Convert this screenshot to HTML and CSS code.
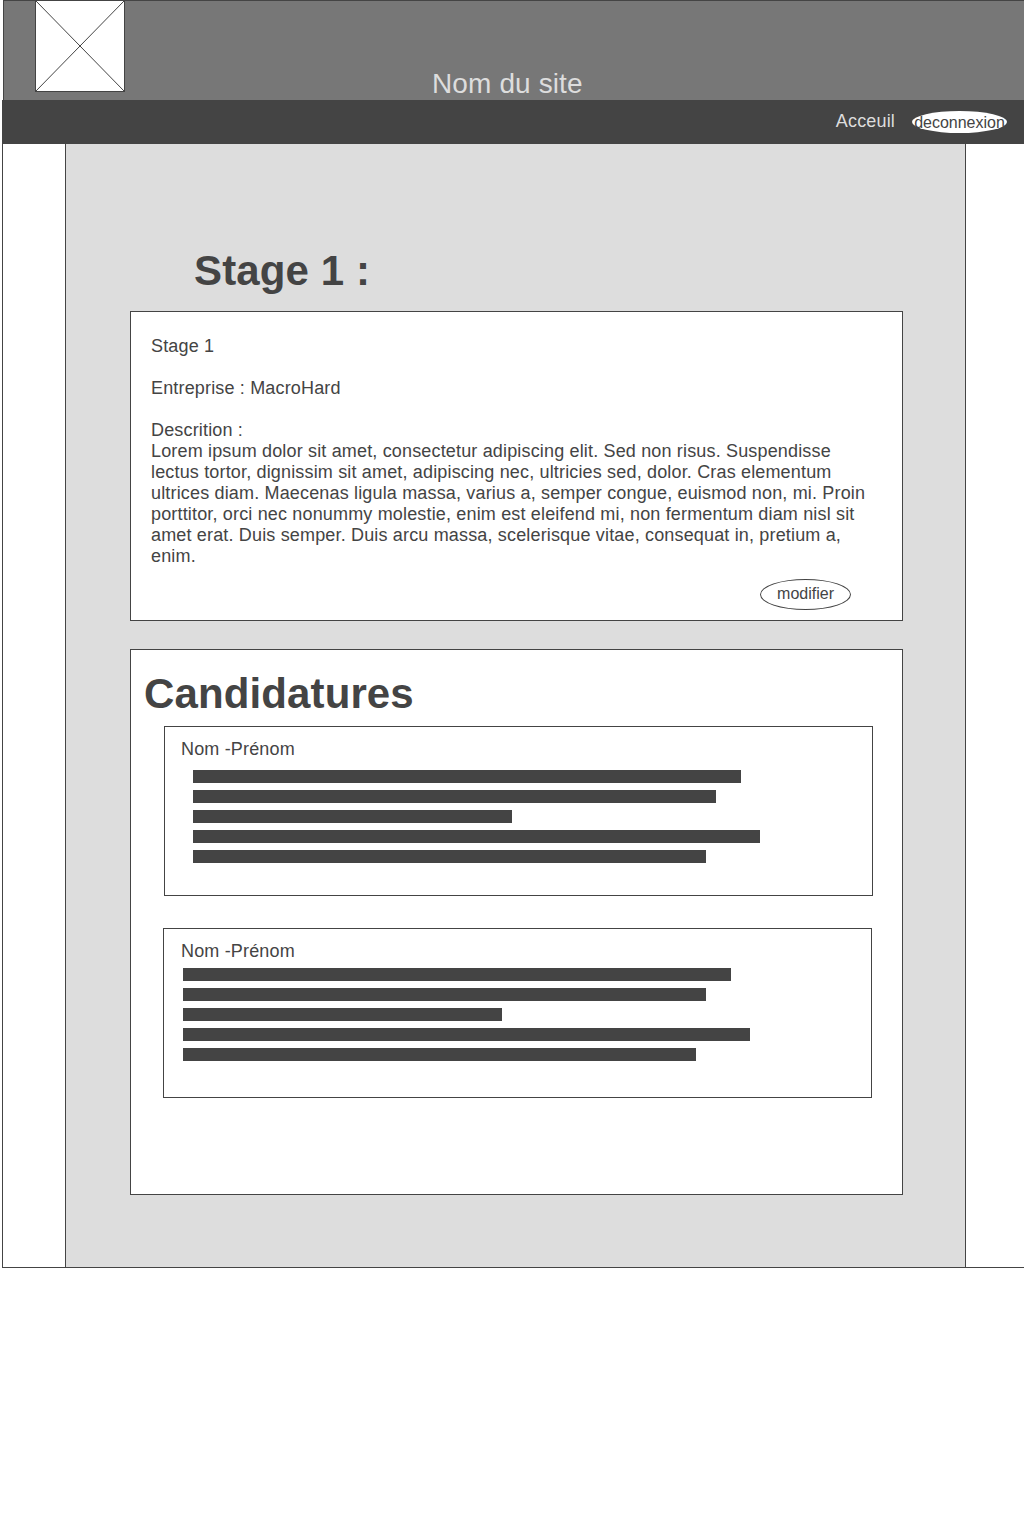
FILE: index.html
```html
<!DOCTYPE html>
<html lang="fr">
<head>
<meta charset="utf-8">
<title>Stage 1</title>
<link rel="stylesheet" href="styles.css">
</head>
<body>
<div class="page">
  <header class="header">
    <svg class="logo" viewBox="0 0 90 92" width="90" height="92" aria-label="Logo">
      <rect x="0.5" y="0.5" width="89" height="91"/>
      <path d="M0.5 0.5L89.5 91.5M89.5 0.5L0.5 91.5"/>
    </svg>
    <div class="site-name">Nom du site</div>
  </header>
  <nav class="nav">
    <a class="nav-link">Acceuil</a>
    <a class="logout">deconnexion</a>
  </nav>
  <main class="content">
    <h1 class="title">Stage 1 :</h1>
    <section class="card offer">
      <p class="text">Stage 1</p>
      <p class="text">Entreprise : MacroHard</p>
      <p class="text">Descrition :<br>
        Lorem ipsum dolor sit amet, consectetur adipiscing elit. Sed non risus. Suspendisse<br>
        lectus tortor, dignissim sit amet, adipiscing nec, ultricies sed, dolor. Cras elementum<br>
        ultrices diam. Maecenas ligula massa, varius a, semper congue, euismod non, mi. Proin<br>
        porttitor, orci nec nonummy molestie, enim est eleifend mi, non fermentum diam nisl sit<br>
        amet erat. Duis semper. Duis arcu massa, scelerisque vitae, consequat in, pretium a,<br>
        enim.</p>
      <button class="edit">modifier</button>
    </section>
    <section class="card applications">
      <h2 class="subtitle">Candidatures</h2>
      <article class="applicant">
        <p class="text">Nom -Prénom</p>
        <div class="lines">
          <div class="line" style="width:548px"></div>
          <div class="line" style="width:523px"></div>
          <div class="line" style="width:319px"></div>
          <div class="line" style="width:567px"></div>
          <div class="line" style="width:513px"></div>
        </div>
      </article>
      <article class="applicant applicant-compact">
        <p class="text">Nom -Prénom</p>
        <div class="lines">
          <div class="line" style="width:548px"></div>
          <div class="line" style="width:523px"></div>
          <div class="line" style="width:319px"></div>
          <div class="line" style="width:567px"></div>
          <div class="line" style="width:513px"></div>
        </div>
      </article>
    </section>
  </main>
</div>
</body>
</html>
```
FILE: styles.css
```css
* { box-sizing: border-box; }

body {
  margin: 0;
  background: #fff;
  color: #444;
  font-family: "Liberation Sans", Arial, sans-serif;
  overflow-x: hidden;
}

h1, h2, p { margin: 0; }

.page {
  display: flex;
  flex-direction: column;
  height: 1268px;
  margin-left: 2px;
  border-bottom: 1px solid #444;
}

.header {
  display: flex;
  align-items: flex-start;
  flex: none;
  height: 100px;
  margin-left: 1px;
  padding-left: 31px;
  background: #777;
  border: solid #444;
  border-width: 1px 0 0 1px;
}

.logo {
  flex: none;
  margin-top: -1px;
  fill: #fff;
  stroke: #444;
  stroke-width: 1;
}

.site-name {
  margin: 67px 0 0 307px;
  color: #ddd;
  font-size: 28px;
  line-height: 32px;
  letter-spacing: 0.12px;
}

.nav {
  display: flex;
  flex: none;
  justify-content: flex-end;
  align-items: flex-start;
  gap: 17px;
  height: 44px;
  padding: 11px 17px 0 0;
  background: #444;
}

.nav-link {
  color: #ddd;
  font-size: 18px;
  line-height: 21px;
  letter-spacing: 0.16px;
}

.logout {
  display: flex;
  justify-content: center;
  width: 95px;
  height: 22px;
  border-radius: 50%;
  background: #fff;
  font-size: 16px;
  line-height: 24px;
}

.content {
  flex: 1;
  display: flex;
  flex-direction: column;
  padding: 103px 0 0 64px;
  border-left: 1px solid #444;
  background: linear-gradient(#444, #444) 62px 0 / 1px 100% no-repeat,
    linear-gradient(#444, #444) 962px 0 / 1px 100% no-repeat,
    linear-gradient(#ddd, #ddd) 62px 0 / 901px 100% no-repeat;
}

.title, .subtitle {
  font-size: 42px;
  line-height: 48px;
  letter-spacing: 0.12px;
}

.title { margin-left: 127px; }

.card {
  width: 773px;
  margin-left: 63px;
  background: #fff;
  border: 1px solid #444;
}

.text {
  font-size: 18px;
  line-height: 21px;
  letter-spacing: 0.163px;
  white-space: nowrap;
}

.offer {
  display: flex;
  flex-direction: column;
  gap: 21px;
  height: 310px;
  margin-top: 16px;
  padding: 24px 20px 0;
}

.edit {
  align-self: flex-end;
  width: 91px;
  height: 31px;
  margin: -9px 31px 0 0;
  padding: 0 0 2px;
  border: 1px solid #444;
  border-radius: 50%;
  background: #fff;
  color: #444;
  font: 16px "Liberation Sans", Arial, sans-serif;
}

.applications {
  height: 546px;
  margin-top: 28px;
  padding: 20px 0 0 33px;
}

.subtitle { margin-left: -20px; }

.applicant {
  width: 709px;
  height: 170px;
  margin-top: 8px;
  padding: 12px 0 0 16px;
  border: 1px solid #444;
}

.applicant-compact {
  margin: 32px 0 0 -1px;
  padding-left: 17px;
}

.lines {
  display: grid;
  gap: 7px;
  margin: 10px 0 0 12px;
}

.applicant-compact .lines { margin: 6px 0 0 2px; }

.line {
  height: 13px;
  background: #444;
}
```
